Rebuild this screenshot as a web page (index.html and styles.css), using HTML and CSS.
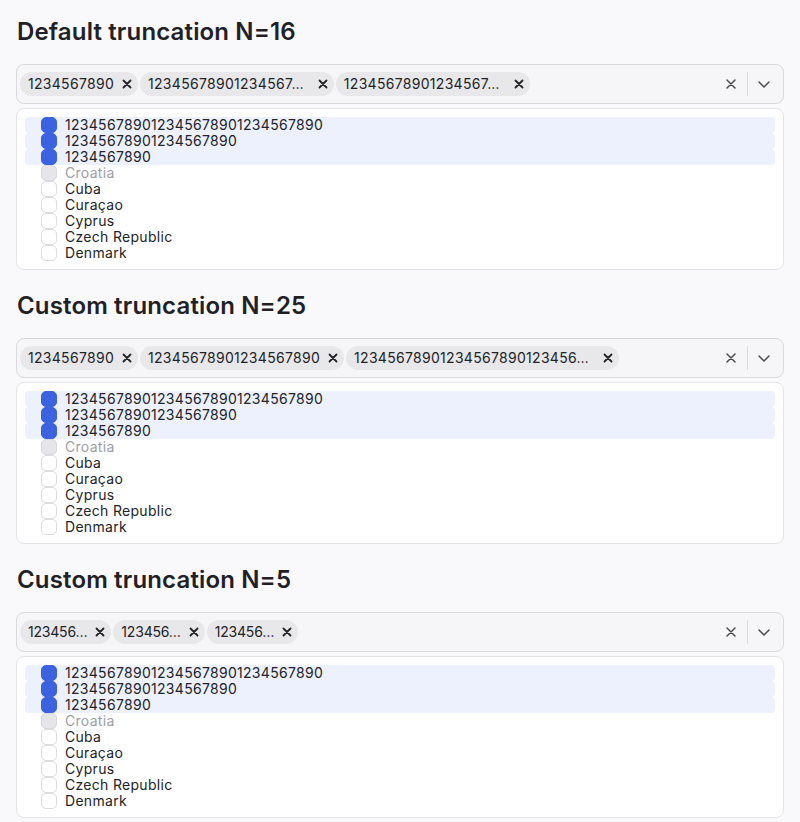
FILE: index.html
```html
<!DOCTYPE html>
<html>
<head>
<meta charset="utf-8">
<link rel="stylesheet" href="styles.css">
</head>
<body>
<section class="demo">
  <h2 class="title">Default truncation N=16</h2>
  <div class="combo">
    <div class="tags">
      <span class="tag"><span class="tag-text">1234567890</span><svg class="tag-x" viewBox="0 0 10 10"><path d="M1.5 1.5L8.5 8.5M8.5 1.5L1.5 8.5"/></svg></span>
      <span class="tag"><span class="tag-text trunc">12345678901234567…</span><svg class="tag-x" viewBox="0 0 10 10"><path d="M1.5 1.5L8.5 8.5M8.5 1.5L1.5 8.5"/></svg></span>
      <span class="tag"><span class="tag-text trunc">12345678901234567…</span><svg class="tag-x" viewBox="0 0 10 10"><path d="M1.5 1.5L8.5 8.5M8.5 1.5L1.5 8.5"/></svg></span>
    </div>
    <div class="actions">
      <span class="btn"><svg class="clear" viewBox="0 0 10 10"><path d="M1 1L9 9M9 1L1 9"/></svg></span>
      <span class="sep"></span>
      <span class="btn"><svg class="chev" viewBox="0 0 12 7"><path d="M1 1L6 6L11 1"/></svg></span>
    </div>
  </div>
  <div class="list">
    <div class="opt sel"><span class="cb on"></span>123456789012345678901234567890</div>
    <div class="opt sel"><span class="cb on"></span>12345678901234567890</div>
    <div class="opt sel"><span class="cb on"></span>1234567890</div>
    <div class="opt dis"><span class="cb"></span>Croatia</div>
    <div class="opt"><span class="cb"></span>Cuba</div>
    <div class="opt"><span class="cb"></span>Curaçao</div>
    <div class="opt"><span class="cb"></span>Cyprus</div>
    <div class="opt"><span class="cb"></span>Czech Republic</div>
    <div class="opt"><span class="cb"></span>Denmark</div>
  </div>
</section>

<section class="demo">
  <h2 class="title">Custom truncation N=25</h2>
  <div class="combo">
    <div class="tags">
      <span class="tag"><span class="tag-text">1234567890</span><svg class="tag-x" viewBox="0 0 10 10"><path d="M1.5 1.5L8.5 8.5M8.5 1.5L1.5 8.5"/></svg></span>
      <span class="tag"><span class="tag-text">12345678901234567890</span><svg class="tag-x" viewBox="0 0 10 10"><path d="M1.5 1.5L8.5 8.5M8.5 1.5L1.5 8.5"/></svg></span>
      <span class="tag"><span class="tag-text trunc">12345678901234567890123456…</span><svg class="tag-x" viewBox="0 0 10 10"><path d="M1.5 1.5L8.5 8.5M8.5 1.5L1.5 8.5"/></svg></span>
    </div>
    <div class="actions">
      <span class="btn"><svg class="clear" viewBox="0 0 10 10"><path d="M1 1L9 9M9 1L1 9"/></svg></span>
      <span class="sep"></span>
      <span class="btn"><svg class="chev" viewBox="0 0 12 7"><path d="M1 1L6 6L11 1"/></svg></span>
    </div>
  </div>
  <div class="list">
    <div class="opt sel"><span class="cb on"></span>123456789012345678901234567890</div>
    <div class="opt sel"><span class="cb on"></span>12345678901234567890</div>
    <div class="opt sel"><span class="cb on"></span>1234567890</div>
    <div class="opt dis"><span class="cb"></span>Croatia</div>
    <div class="opt"><span class="cb"></span>Cuba</div>
    <div class="opt"><span class="cb"></span>Curaçao</div>
    <div class="opt"><span class="cb"></span>Cyprus</div>
    <div class="opt"><span class="cb"></span>Czech Republic</div>
    <div class="opt"><span class="cb"></span>Denmark</div>
  </div>
</section>

<section class="demo">
  <h2 class="title">Custom truncation N=5</h2>
  <div class="combo">
    <div class="tags short">
      <span class="tag"><span class="tag-text trunc">123456…</span><svg class="tag-x" viewBox="0 0 10 10"><path d="M1.5 1.5L8.5 8.5M8.5 1.5L1.5 8.5"/></svg></span>
      <span class="tag"><span class="tag-text trunc">123456…</span><svg class="tag-x" viewBox="0 0 10 10"><path d="M1.5 1.5L8.5 8.5M8.5 1.5L1.5 8.5"/></svg></span>
      <span class="tag"><span class="tag-text trunc">123456…</span><svg class="tag-x" viewBox="0 0 10 10"><path d="M1.5 1.5L8.5 8.5M8.5 1.5L1.5 8.5"/></svg></span>
    </div>
    <div class="actions">
      <span class="btn"><svg class="clear" viewBox="0 0 10 10"><path d="M1 1L9 9M9 1L1 9"/></svg></span>
      <span class="sep"></span>
      <span class="btn"><svg class="chev" viewBox="0 0 12 7"><path d="M1 1L6 6L11 1"/></svg></span>
    </div>
  </div>
  <div class="list">
    <div class="opt sel"><span class="cb on"></span>123456789012345678901234567890</div>
    <div class="opt sel"><span class="cb on"></span>12345678901234567890</div>
    <div class="opt sel"><span class="cb on"></span>1234567890</div>
    <div class="opt dis"><span class="cb"></span>Croatia</div>
    <div class="opt"><span class="cb"></span>Cuba</div>
    <div class="opt"><span class="cb"></span>Curaçao</div>
    <div class="opt"><span class="cb"></span>Cyprus</div>
    <div class="opt"><span class="cb"></span>Czech Republic</div>
    <div class="opt"><span class="cb"></span>Denmark</div>
  </div>
</section>
</body>
</html>
```

FILE: styles.css
```css
* { box-sizing: border-box; }

html, body {
  margin: 0;
  background: #f9f9fb;
}

body {
  padding: 16px 16px 0;
  font-family: Inter, "Liberation Sans", sans-serif;
  color: #222326;
}

.demo {
  margin-bottom: 20px;
}

.demo:last-child {
  margin-bottom: 0;
}

.title {
  margin: 0 0 16px;
  font-size: 24px;
  line-height: 32px;
  font-weight: 600;
  letter-spacing: 0.15px;
  color: #1f2126;
  padding-left: 1px;
}

.combo {
  display: flex;
  align-items: center;
  height: 40px;
  padding: 7px 3px;
  background: #f6f6f8;
  border: 1px solid #d9d9de;
  border-radius: 8px;
}

.tags {
  flex: 1;
  display: flex;
  gap: 2px;
  min-width: 0;
}

.tag {
  display: inline-flex;
  align-items: center;
  height: 24px;
  padding: 0 6px 0 8px;
  gap: 8px;
  background: #e8e8eb;
  border-radius: 12px;
  font-size: 14px;
  line-height: 24px;
  letter-spacing: 0.3px;
  white-space: nowrap;
  color: #222326;
}

.tag-text.trunc {
  margin-right: 6px;
}

.tags.short .tag-text.trunc {
  margin-right: 0;
  letter-spacing: -0.2px;
}

.tag-x {
  width: 10px;
  height: 10px;
  fill: none;
  stroke: #222326;
  stroke-width: 1.8;
  stroke-linecap: round;
}

.actions {
  display: flex;
  align-items: center;
  height: 24px;
}

.btn {
  width: 32px;
  height: 24px;
  display: flex;
  align-items: center;
  justify-content: center;
}

.sep {
  width: 1px;
  height: 24px;
  background: #dedee2;
}

.clear {
  width: 10px;
  height: 10px;
  fill: none;
  stroke: #4a4b50;
  stroke-width: 1.5;
  stroke-linecap: round;
}

.chev {
  width: 12px;
  height: 7px;
  fill: none;
  stroke: #4a4b50;
  stroke-width: 1.5;
  stroke-linecap: round;
  stroke-linejoin: round;
}

.list {
  margin-top: 4px;
  padding: 8px;
  background: #ffffff;
  border: 1px solid #e4e4e8;
  border-radius: 8px;
}

.opt {
  display: flex;
  align-items: center;
  gap: 8px;
  height: 16px;
  padding-left: 16px;
  font-size: 14px;
  line-height: 16px;
  letter-spacing: 0.3px;
  color: #222326;
  border-radius: 4px;
  white-space: nowrap;
}

.opt.sel {
  background: #edf1fd;
}

.opt.dis {
  color: #9d9ea6;
}

.cb {
  flex: none;
  width: 16px;
  height: 16px;
  border: 1px solid #dcdce1;
  border-radius: 5px;
  background: #ffffff;
}

.cb.on {
  background: #3b63e0;
  border-color: #3b63e0;
}

.opt.dis .cb {
  background: #e6e6ea;
  border-color: #d7d7dc;
}
```
